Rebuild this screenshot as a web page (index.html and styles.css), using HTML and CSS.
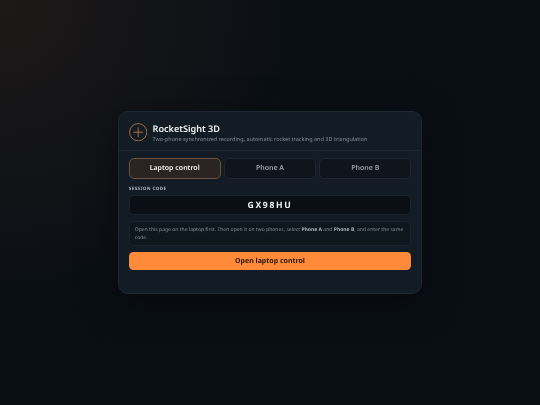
FILE: index.html
```html
<!DOCTYPE html>
<html lang="en">
<head>
<meta charset="utf-8">
<title>RocketSight 3D</title>
<link rel="stylesheet" href="styles.css">
</head>
<body>
<main class="card">
  <header class="head">
    <svg class="logo" viewBox="0 0 22 22" width="18.4" height="18.4" aria-hidden="true">
      <circle cx="11" cy="11" r="10.3"></circle>
      <path d="M11 5.1V16.9M5.1 11H16.9"></path>
    </svg>
    <div class="head-text">
      <h1>RocketSight 3D</h1>
      <p>Two-phone synchronized recording, automatic rocket tracking and 3D triangulation</p>
    </div>
  </header>
  <section class="body">
    <div class="tabs">
      <button class="tab active">Laptop control</button>
      <button class="tab">Phone A</button>
      <button class="tab">Phone B</button>
    </div>
    <label class="label">SESSION CODE</label>
    <div class="code">GX98HU</div>
    <p class="note">Open this page on the laptop first. Then open it on two phones, select <b>Phone A</b> and <b>Phone B</b>, and enter the same code.</p>
    <button class="cta">Open laptop control</button>
  </section>
</main>
</body>
</html>
```
FILE: styles.css
```css
* { box-sizing: border-box; }
html, body { height: 100%; }
body {
  margin: 0;
  display: flex;
  align-items: center;
  justify-content: center;
  font-family: "Noto Sans", sans-serif;
  text-rendering: geometricPrecision;
  background:
    radial-gradient(circle at 0 0, rgba(255,140,60,0.08), rgba(255,140,60,0) 45%),
    #0a0f15;
  color: #e8ebef;
}
.card {
  width: 303.5px;
  height: 183px;
  border: 1px solid #1f2832;
  border-radius: 10px;
  background: #131b24;
  box-shadow: 0 10px 40px rgba(0,0,0,0.42);
  filter: blur(0.2px);
}
.head {
  display: flex;
  align-items: center;
  gap: 5.4px;
  height: 39px;
  padding: 0 9.5px;
  border-bottom: 1px solid #1f2832;
}
.logo { flex: none; margin-top: 2px; }
.logo circle, .logo path { fill: none; stroke: #d4854c; stroke-width: 0.9; }
.head-text { min-width: 0; padding-top: 3px; }
h1 {
  margin: 0;
  font-size: 9.1px;
  line-height: 13px;
  font-weight: 600;
  color: #f4f6f8;
}
.head-text p {
  margin: 0;
  font-size: 5.5px;
  line-height: 9px;
  color: #858f9b;
  white-space: nowrap;
}
.body { padding: 7px 9.5px 0; }
.tabs {
  display: grid;
  grid-template-columns: repeat(3, 1fr);
  gap: 3.5px;
}
.tab {
  height: 20.8px;
  padding: 0;
  border: 1px solid #1e2731;
  border-radius: 5px;
  background: #0e151c;
  color: #98a1ac;
  font: 600 7px "Noto Sans", sans-serif;
  text-rendering: geometricPrecision;
}
.tab.active {
  border-color: #6d5240;
  background: #2a2523;
  color: #f6f2ee;
}
.label {
  display: block;
  margin-top: 6.2px;
  font-size: 4.6px;
  line-height: 9px;
  font-weight: 700;
  letter-spacing: 0.4px;
  color: #b0b8c1;
}
.code {
  height: 20px;
  margin-top: 1.5px;
  border: 1px solid #1a222b;
  border-radius: 5px;
  background: #0a0f15;
  color: #f2f4f6;
  font-size: 8.6px;
  font-weight: 700;
  line-height: 18px;
  letter-spacing: 1.7px;
  text-align: center;
}
.note {
  height: 25px;
  margin: 6px 0 0;
  padding: 5px 4px 0 5px;
  border: 1px solid #1a242e;
  border-radius: 5px;
  background: #0e161e;
  font-size: 5.05px;
  line-height: 7.8px;
  color: #858f9b;
}
.note b { font-weight: 700; color: #aab2bb; }
.cta {
  display: block;
  width: 100%;
  height: 17.5px;
  margin-top: 5.8px;
  padding: 0;
  border: 0;
  border-radius: 4.5px;
  background: #ff8a3a;
  color: #2a1608;
  font: 700 7px "Noto Sans", sans-serif;
  text-rendering: geometricPrecision;
}
```
